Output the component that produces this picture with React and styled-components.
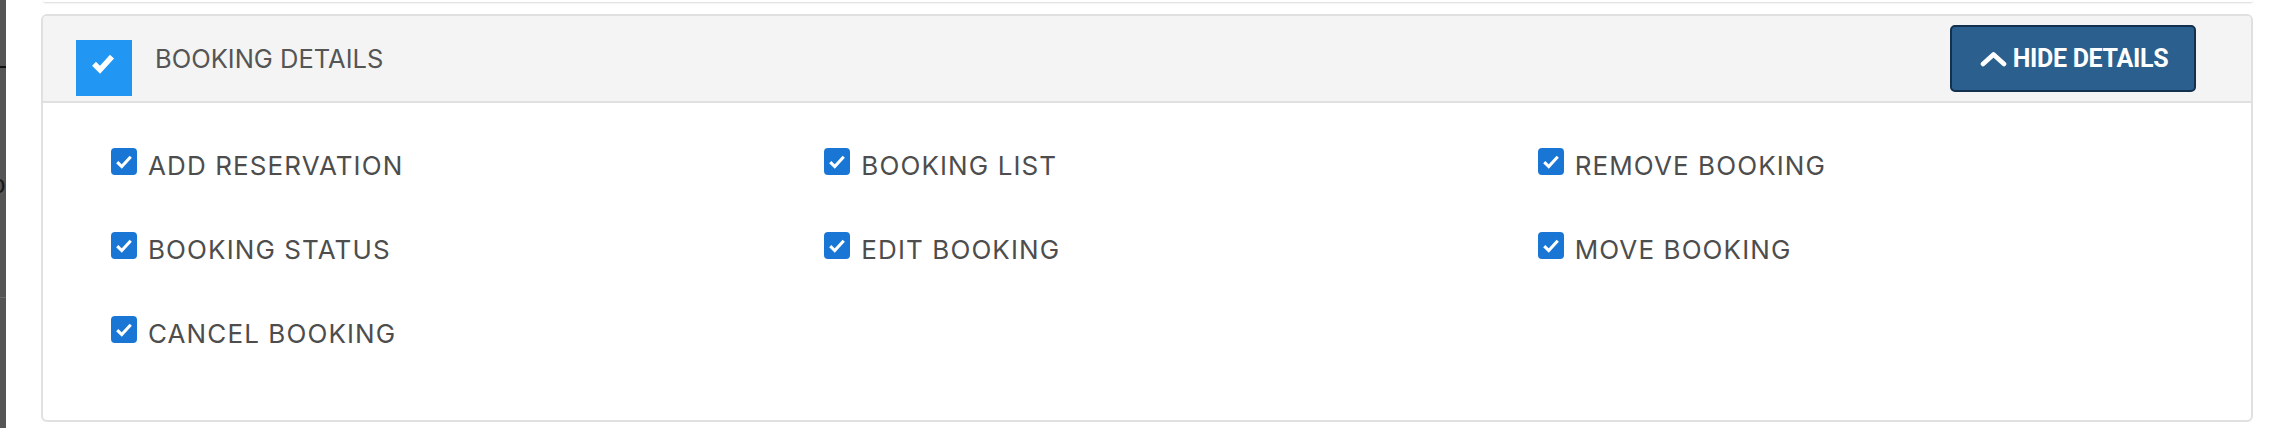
import React from 'react';
import styled, { createGlobalStyle } from 'styled-components';

const Global = createGlobalStyle`
  html, body { margin: 0; padding: 0; background: #fff; }
  body { font-family: Inter, "Noto Sans", sans-serif; }
  * { box-sizing: border-box; }
`;

const Page = styled.div`
  display: flex;
  width: 2282px;
  height: 428px;
  overflow: hidden;
  background: #fff;
`;

const SideStrip = styled.div`
  flex: none;
  width: 6px;
  background: #555;
  display: flex;
  flex-direction: column;
  overflow: hidden;
`;

const StripRule = styled.div`
  height: ${p => p.$h || 1}px;
  background: ${p => p.$color || '#111'};
  margin-top: ${p => p.$top}px;
`;

const StripGlyph = styled.div`
  height: 24px;
  margin-top: ${p => p.$top}px;
  overflow: hidden;
  font-family: "Liberation Sans", sans-serif;
  font-size: 26px;
  line-height: 24px;
  color: #1a1a1a;
  white-space: nowrap;
  & > span { display: inline-block; margin-left: -9px; }
`;

const Main = styled.div`
  flex: 1;
  display: flex;
  flex-direction: column;
  padding: 0 29px 0 35px;
`;

const PrevPanelEdge = styled.div`
  height: 3px;
  margin-left: 2px;
  background: #fff;
  border-bottom: 1px solid #e3e3e3;
  border-radius: 0 0 4px 4px;
  box-shadow: 0 1px 2px rgba(0, 0, 0, 0.05);
`;

const Panel = styled.section`
  margin-top: 11px;
  height: 408px;
  border: 2px solid #e0e0e0;
  border-radius: 6px;
  background: #fff;
  display: flex;
  flex-direction: column;
  overflow: hidden;
`;

const Header = styled.header`
  flex: none;
  height: 87px;
  display: flex;
  align-items: center;
  padding: 0 55px 0 33px;
  background: #f4f4f4;
  border-bottom: 2px solid #e0e0e0;
`;

const HeaderBox = styled.div`
  flex: none;
  width: 56px;
  height: 56px;
  margin-top: 19px;
  background: #2196f3;
  display: flex;
  align-items: center;
  justify-content: center;
  padding: 0 2px 9px 0;
`;

const Title = styled.h2`
  margin: 0 0 0 23px;
  font-size: 25.5px;
  font-weight: 400;
  color: #555;
  letter-spacing: 0;
`;

const ToggleButton = styled.button`
  margin-left: auto;
  height: 67px;
  width: 246px;
  display: flex;
  align-items: center;
  justify-content: center;
  gap: 6px;
  padding: 0 0 0 2px;
  background: #2b5f8d;
  border: 2px solid #14304f;
  border-radius: 5px;
  color: #fff;
  font-family: Roboto, "Liberation Sans", sans-serif;
  font-weight: 700;
  font-size: 25px;
  letter-spacing: -0.3px;
  cursor: pointer;
`;

const Body = styled.div`
  display: grid;
  grid-template-columns: repeat(3, 1fr);
  row-gap: 48px;
  padding: 45px 0 0 68px;
`;

const Item = styled.label`
  display: flex;
  align-items: flex-start;
  gap: 11px;
  cursor: pointer;
`;

const Box = styled.span`
  flex: none;
  width: 26px;
  height: 27px;
  border-radius: 4px;
  background: #1a76d4;
  display: flex;
  align-items: center;
  justify-content: center;
`;

const ItemText = styled.span`
  font-size: 26px;
  line-height: 36px;
  letter-spacing: 1.1px;
  color: #4d4d4d;
  white-space: nowrap;
`;

const Check = ({ size, stroke }) => (
  <svg width={size} height={size * 0.85} viewBox="0 0 20 17" aria-hidden="true">
    <polyline points="2.5,9 7.5,14 17.5,3" fill="none" stroke="#fff" strokeWidth={stroke} strokeLinecap="butt" strokeLinejoin="miter" />
  </svg>
);

const ChevronUp = () => (
  <svg width="27" height="16" viewBox="0 0 27 16" aria-hidden="true">
    <polyline points="3,13 13.5,3.5 24,13" fill="none" stroke="#fff" strokeWidth="4.6" strokeLinecap="round" strokeLinejoin="round" />
  </svg>
);

const items = [
  'ADD RESERVATION', 'BOOKING LIST', 'REMOVE BOOKING',
  'BOOKING STATUS', 'EDIT BOOKING', 'MOVE BOOKING',
  'CANCEL BOOKING',
];

export default function App() {
  return (
    <>
      <Global />
      <Page>
        <SideStrip>
          <StripRule $top={66} $h={2} />
          <StripGlyph $top={104}><span>o</span></StripGlyph>
          <StripRule $top={101} $h={1} $color="#6a6a6a" />
        </SideStrip>
        <Main>
          <PrevPanelEdge />
          <Panel>
            <Header>
              <HeaderBox><Check size={24} stroke={4.6} /></HeaderBox>
              <Title>BOOKING DETAILS</Title>
              <ToggleButton type="button"><ChevronUp />HIDE DETAILS</ToggleButton>
            </Header>
            <Body>
              {items.map(t => (
                <Item key={t}>
                  <Box><Check size={18} stroke={3.4} /></Box>
                  <ItemText>{t}</ItemText>
                </Item>
              ))}
            </Body>
          </Panel>
        </Main>
      </Page>
    </>
  );
}
